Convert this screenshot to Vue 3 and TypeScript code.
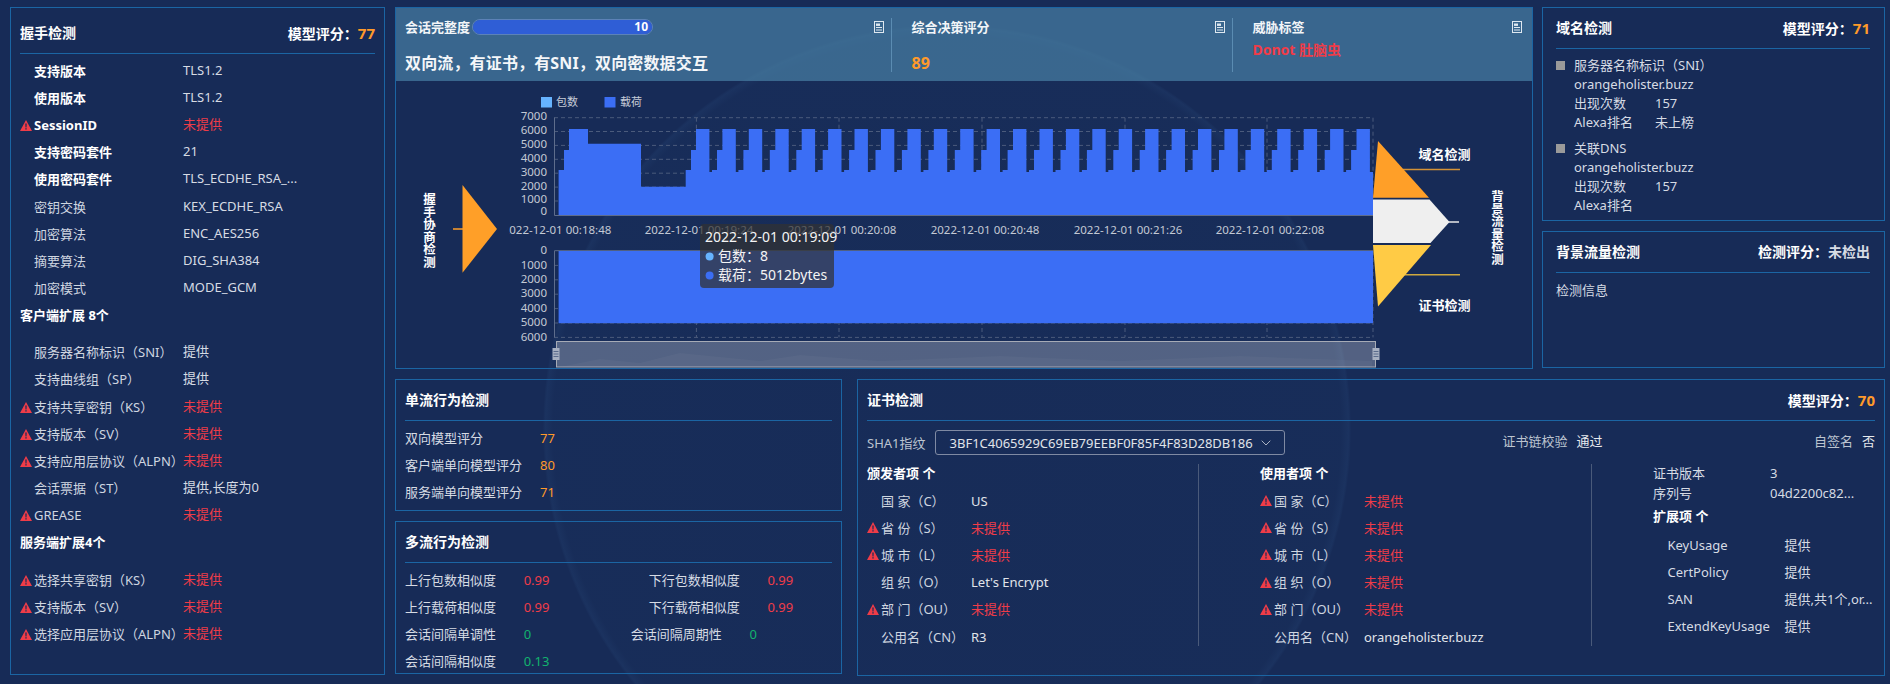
<script setup lang="ts">
interface Row { k: string; v: string; warn?: boolean; bold?: boolean }

const NA = '未提供'
const hsRows: Row[] = [
  { k: '支持版本', v: 'TLS1.2', bold: true },
  { k: '使用版本', v: 'TLS1.2', bold: true },
  { k: 'SessionID', v: NA, warn: true, bold: true },
  { k: '支持密码套件', v: '21', bold: true },
  { k: '使用密码套件', v: 'TLS_ECDHE_RSA_...', bold: true },
  { k: '密钥交换', v: 'KEX_ECDHE_RSA' },
  { k: '加密算法', v: 'ENC_AES256' },
  { k: '摘要算法', v: 'DIG_SHA384' },
  { k: '加密模式', v: 'MODE_GCM' },
]
const clientRows: Row[] = [
  { k: '服务器名称标识（SNI）', v: '提供' },
  { k: '支持曲线组（SP）', v: '提供' },
  { k: '支持共享密钥（KS）', v: NA, warn: true },
  { k: '支持版本（SV）', v: NA, warn: true },
  { k: '支持应用层协议（ALPN）', v: NA, warn: true },
  { k: '会话票据（ST）', v: '提供,长度为0' },
  { k: 'GREASE', v: NA, warn: true },
]
const serverRows: Row[] = [
  { k: '选择共享密钥（KS）', v: NA, warn: true },
  { k: '支持版本（SV）', v: NA, warn: true },
  { k: '选择应用层协议（ALPN）', v: NA, warn: true },
]
const single = [
  { k: '双向模型评分', v: '77' },
  { k: '客户端单向模型评分', v: '80' },
  { k: '服务端单向模型评分', v: '71' },
]
const multi = [
  { a: '上行包数相似度', av: '0.99', b: '下行包数相似度', bv: '0.99', tone: 'red', shift: false },
  { a: '上行载荷相似度', av: '0.99', b: '下行载荷相似度', bv: '0.99', tone: 'red', shift: false },
  { a: '会话间隔单调性', av: '0', b: '会话间隔周期性', bv: '0', tone: 'green', shift: true },
  { a: '会话间隔相似度', av: '0.13', b: '', bv: '', tone: 'green', shift: false },
]
const issuer: Row[] = [
  { k: '国 家（C）', v: 'US' },
  { k: '省 份（S）', v: NA, warn: true },
  { k: '城 市（L）', v: NA, warn: true },
  { k: '组 织（O）', v: "Let's Encrypt" },
  { k: '部 门（OU）', v: NA, warn: true },
  { k: '公用名（CN）', v: 'R3' },
]
const subject: Row[] = [
  { k: '国 家（C）', v: NA, warn: true },
  { k: '省 份（S）', v: NA, warn: true },
  { k: '城 市（L）', v: NA, warn: true },
  { k: '组 织（O）', v: NA, warn: true },
  { k: '部 门（OU）', v: NA, warn: true },
  { k: '公用名（CN）', v: 'orangeholister.buzz' },
]
const exts: Row[] = [
  { k: 'KeyUsage', v: '提供' },
  { k: 'CertPolicy', v: '提供' },
  { k: 'SAN', v: '提供,共1个,or...' },
  { k: 'ExtendKeyUsage', v: '提供' },
]

// chart geometry, in page pixels
const yTop = [116.7, 130.5, 144.4, 158.3, 172.2, 186.1, 200, 214]
const yTopLabels = ['7000', '6000', '5000', '4000', '3000', '2000', '1000', '0']
const yBot = [250, 264.4, 278.8, 293.2, 307.6, 322, 336.4]
const yBotLabels = ['0', '1000', '2000', '3000', '4000', '5000', '6000']
const vTicks = [696.4, 839, 982, 1125, 1267]
const xLabels = [
  { x: 557, t: '2022-12-01 00:18:48' },
  { x: 699, t: '2022-12-01 00:19:24' },
  { x: 842, t: '2022-12-01 00:20:08' },
  { x: 985, t: '2022-12-01 00:20:48' },
  { x: 1128, t: '2022-12-01 00:21:26' },
  { x: 1270, t: '2022-12-01 00:22:08' },
]

function barsPath(): string {
  const pts: [number, number][] = [
    [558.6, 169], [564, 169], [564, 149], [569, 149], [569, 128], [588, 128], [588, 142.7],
    [641, 142.7], [641, 185.7], [685.7, 185.7], [685.7, 169], [691, 169], [691, 149], [696, 149],
  ]
  for (let t = 696; t < 1360; t += 26.42) {
    const n = t + 26.42
    pts.push([t, 128], [t + 13.4, 128])
    if (n < 1360) {
      pts.push([t + 13.4, 171], [t + 16, 171], [t + 16, 169], [t + 21, 169], [t + 21, 149], [n, 149])
    } else {
      pts.push([t + 13.4, 171], [1373, 171])
    }
  }
  return 'M558.6 214 ' + pts.map((p) => `L${p[0].toFixed(1)} ${p[1]}`).join(' ') + ' L1373 214 Z'
}
const bars = barsPath()
</script>

<template>
  <div class="page">
    <div class="ring"></div>

    <section class="panel left">
      <header class="hd"><b>握手检测</b><b>模型评分：<i class="score">77</i></b></header>
      <div class="row" v-for="r in hsRows" :key="r.k">
        <span class="ic"><svg v-if="r.warn" viewBox="0 0 12 11" width="12" height="11"><path d="M6 0 12 11H0Z" fill="#ef3c48"/><path d="M5.3 3.6h1.4l-.2 4h-1zM5.3 8.3h1.4v1.3H5.3z" fill="#172b57"/></svg></span>
        <span class="k" :class="{ strong: r.bold }">{{ r.k }}</span>
        <span class="v" :class="{ red: r.v === NA }">{{ r.v }}</span>
      </div>
      <div class="sub first">客户端扩展 8个</div>
      <div class="row" v-for="r in clientRows" :key="r.k">
        <span class="ic"><svg v-if="r.warn" viewBox="0 0 12 11" width="12" height="11"><path d="M6 0 12 11H0Z" fill="#ef3c48"/><path d="M5.3 3.6h1.4l-.2 4h-1zM5.3 8.3h1.4v1.3H5.3z" fill="#172b57"/></svg></span>
        <span class="k">{{ r.k }}</span>
        <span class="v" :class="{ red: r.v === NA }">{{ r.v }}</span>
      </div>
      <div class="sub">服务端扩展4个</div>
      <div class="row" v-for="r in serverRows" :key="r.k">
        <span class="ic"><svg viewBox="0 0 12 11" width="12" height="11"><path d="M6 0 12 11H0Z" fill="#ef3c48"/><path d="M5.3 3.6h1.4l-.2 4h-1zM5.3 8.3h1.4v1.3H5.3z" fill="#172b57"/></svg></span>
        <span class="k">{{ r.k }}</span>
        <span class="v red">{{ r.v }}</span>
      </div>
    </section>

    <div class="right-area">
      <div class="top-row">
        <section class="panel center">
          <div class="banner">
            <div class="sec s1">
              <div class="line1">
                <b class="lt">会话完整度</b>
                <span class="progress"><span class="fill">10</span></span>
                <svg class="doc" viewBox="0 0 10 12" width="10" height="12"><rect x=".5" y=".5" width="9" height="11" fill="none" stroke="#dfe8f0"/><rect x="2" y="2.5" width="4" height="2.4" fill="#dfe8f0"/><path d="M2 6.5h6M2 9h6" stroke="#dfe8f0"/></svg>
              </div>
              <div class="line2">双向流，有证书，有SNI，双向密数据交互</div>
            </div>
            <div class="sec s2">
              <div class="line1">
                <b class="lt">综合决策评分</b>
                <svg class="doc" viewBox="0 0 10 12" width="10" height="12"><rect x=".5" y=".5" width="9" height="11" fill="none" stroke="#dfe8f0"/><rect x="2" y="2.5" width="4" height="2.4" fill="#dfe8f0"/><path d="M2 6.5h6M2 9h6" stroke="#dfe8f0"/></svg>
              </div>
              <div class="line2 orange">89</div>
            </div>
            <div class="sec s3">
              <div class="line1">
                <b class="lt">威胁标签</b>
                <svg class="doc" viewBox="0 0 10 12" width="10" height="12"><rect x=".5" y=".5" width="9" height="11" fill="none" stroke="#dfe8f0"/><rect x="2" y="2.5" width="4" height="2.4" fill="#dfe8f0"/><path d="M2 6.5h6M2 9h6" stroke="#dfe8f0"/></svg>
              </div>
              <div class="threat">Donot 肚脑虫</div>
            </div>
          </div>

          <svg class="chart" viewBox="396 80 1136 288" width="1136" height="288">
            <defs>
              <clipPath id="xclip"><rect x="509" y="215" width="1000" height="30" /></clipPath>
            </defs>

            <!-- legend -->
            <rect x="541" y="96" width="11" height="10.5" fill="#66b3ff" />
            <text class="legend" x="556" y="104.5">包数</text>
            <rect x="604.5" y="96" width="11" height="10.5" fill="#3b6ef5" />
            <text class="legend" x="620" y="104.5">载荷</text>

            <!-- grid -->
            <g class="grid">
              <line v-for="y in yTop.slice(0, 7)" :key="'t' + y" x1="554" :y1="y" x2="1373" :y2="y" />
              <line v-for="y in yBot.slice(1)" :key="'b' + y" x1="554" :y1="y" x2="1373" :y2="y" />
              <template v-for="x in vTicks" :key="'v' + x">
                <line :x1="x" y1="116.7" :x2="x" y2="214" />
                <line :x1="x" y1="250" :x2="x" y2="336.4" />
              </template>
              <line x1="1373" y1="116.7" x2="1373" y2="214" />
              <line x1="1373" y1="250" x2="1373" y2="336.4" />
            </g>
            <path d="M554.5 116.7V214.5H1373M554.5 336.4V249.7H1373" fill="none" stroke="#5e6d8c" />

            <!-- series -->
            <path :d="bars" fill="#3b6ef5" />
            <rect x="558.6" y="250" width="814.4" height="72.2" fill="#3b6ef5" />

            <!-- axis labels -->
            <text v-for="(t, i) in yTopLabels" :key="'yt' + i" class="axis" x="547" :y="yTop[i] + 2.4 - (i === 7 ? 2 : 0)" text-anchor="end">{{ t }}</text>
            <text v-for="(t, i) in yBotLabels" :key="'yb' + i" class="axis" x="547" :y="yBot[i] + 3.2" text-anchor="end">{{ t }}</text>
            <g clip-path="url(#xclip)">
              <text v-for="l in xLabels" :key="l.t" class="axis" :x="l.x" y="233" text-anchor="middle">{{ l.t }}</text>
            </g>

            <!-- zoom slider -->
            <path d="M560 366 L600 358 L640 362 L680 352 L760 360 L800 354 L880 360 L1000 355 L1120 360 L1240 355 L1372 360 V366Z" fill="#fff" opacity=".03" />
            <rect x="556.5" y="340.5" width="819" height="25.5" fill="#ffffff" fill-opacity=".26" stroke="#a6abb6" />
            <g fill="#a7b0c2">
              <rect x="552.5" y="347" width="7" height="12" />
              <rect x="1372.5" y="347" width="7" height="12" />
            </g>
            <path d="M553.5 350.5h5M553.5 353h5M553.5 355.5h5M1373.5 350.5h5M1373.5 353h5M1373.5 355.5h5" stroke="#5a6b8c" />

            <!-- left funnel -->
            <line x1="453" y1="228" x2="463" y2="228" stroke="#ff9f28" stroke-width="1.5" />
            <path d="M462.5 184 497 228 462.5 271.7Z" fill="#ff9f28" />
            <text class="vtext" x="428.6" y="192">握手协商检测</text>

            <!-- right funnel -->
            <path d="M1403 168.4H1460" stroke="#d49237" stroke-width="1.5" />
            <path d="M1448 221H1459" stroke="#e8e8e8" stroke-width="1.5" />
            <path d="M1403 273.7H1460" stroke="#cfa93f" stroke-width="1.5" />
            <path d="M1378 140 1429 196.8H1373Z" fill="#ff9f28" />
            <path d="M1373 198.4H1429.5L1449.5 221 1430.5 242H1373Z" fill="#efefef" />
            <path d="M1373 244H1431L1378 305.5Z" fill="#ffcb45" />
            <text class="flabel" x="1418.5" y="158">域名检测</text>
            <text class="flabel" x="1418.5" y="309">证书检测</text>
            <text class="vtext" x="1496.5" y="189">背景流量检测</text>

            <!-- tooltip -->
            <rect x="700" y="223" width="134" height="64" rx="4" fill="#323232" fill-opacity=".72" />
            <text class="tip" x="705" y="241">2022-12-01 00:19:09</text>
            <circle cx="709.6" cy="255.4" r="4" fill="#66b3ff" />
            <text class="tip" x="718" y="260">包数：8</text>
            <circle cx="709.6" cy="274.4" r="4" fill="#3b6ef5" />
            <text class="tip" x="718" y="279">载荷：5012bytes</text>
          </svg>
        </section>

        <div class="side">
          <section class="panel domain">
            <header class="hd"><b>域名检测</b><b>模型评分：<i class="score">71</i></b></header>
            <div class="dblock">
              <i class="sq"></i>
              <div class="dlines">
                <div>服务器名称标识（SNI）</div>
                <div>orangeholister.buzz</div>
                <div class="dpair"><span>出现次数</span><span class="dv">157</span></div>
                <div class="dpair"><span>Alexa排名</span><span class="dv">未上榜</span></div>
              </div>
            </div>
            <div class="dblock second">
              <i class="sq"></i>
              <div class="dlines">
                <div>关联DNS</div>
                <div>orangeholister.buzz</div>
                <div class="dpair"><span>出现次数</span><span class="dv">157</span></div>
                <div class="dpair"><span>Alexa排名</span></div>
              </div>
            </div>
          </section>
          <section class="panel background">
            <header class="hd"><b>背景流量检测</b><b>检测评分：<span class="undet">未检出</span></b></header>
            <div class="info">检测信息</div>
          </section>
        </div>
      </div>

      <div class="bottom-row">
        <div class="flows">
          <section class="panel single">
            <header class="hd"><b>单流行为检测</b></header>
            <div class="srow" v-for="r in single" :key="r.k"><span class="sk">{{ r.k }}</span><span class="orange-t">{{ r.v }}</span></div>
          </section>
          <section class="panel multi">
            <header class="hd"><b>多流行为检测</b></header>
            <div class="mrow" v-for="m in multi" :key="m.a">
              <span class="mk">{{ m.a }}</span>
              <span class="mv" :class="m.tone">{{ m.av }}</span>
              <span class="mk2" :class="{ shifted: m.shift }">{{ m.b }}</span>
              <span :class="m.tone">{{ m.bv }}</span>
            </div>
          </section>
        </div>

        <section class="panel cert">
          <header class="hd"><b>证书检测</b><b>模型评分：<i class="score">70</i></b></header>
          <div class="sha">
            <span class="dim">SHA1指纹</span>
            <div class="select">
              <span>3BF1C4065929C69EB79EEBF0F85F4F83D28DB186</span>
              <svg viewBox="0 0 10 6" width="10" height="6"><path d="M.7.7 5 5 9.3.7" fill="none" stroke="#aab2c2" stroke-width="1" /></svg>
            </div>
            <span class="chain"><span class="dim">证书链校验</span><span class="chain-v">通过</span></span>
            <span class="self"><span class="dim">自签名</span><span class="chain-v">否</span></span>
          </div>
          <div class="cols">
            <div class="col c1">
              <div class="chead">颁发者项 个</div>
              <div class="crow" v-for="r in issuer" :key="r.k">
                <span class="ic2"><svg v-if="r.warn" viewBox="0 0 12 11" width="12" height="11"><path d="M6 0 12 11H0Z" fill="#ef3c48"/><path d="M5.3 3.6h1.4l-.2 4h-1zM5.3 8.3h1.4v1.3H5.3z" fill="#172b57"/></svg></span>
                <span class="ck">{{ r.k }}</span>
                <span :class="r.v === NA ? 'red' : 'light'">{{ r.v }}</span>
              </div>
            </div>
            <div class="col c2">
              <div class="chead">使用者项 个</div>
              <div class="crow" v-for="r in subject" :key="r.k">
                <span class="ic2"><svg v-if="r.warn" viewBox="0 0 12 11" width="12" height="11"><path d="M6 0 12 11H0Z" fill="#ef3c48"/><path d="M5.3 3.6h1.4l-.2 4h-1zM5.3 8.3h1.4v1.3H5.3z" fill="#172b57"/></svg></span>
                <span class="ck">{{ r.k }}</span>
                <span :class="r.v === NA ? 'red' : 'light'">{{ r.v }}</span>
              </div>
            </div>
            <div class="col c3">
              <div class="meta first"><span>证书版本</span><span>3</span></div>
              <div class="meta"><span>序列号</span><span>04d2200c82...</span></div>
              <div class="chead ext">扩展项 个</div>
              <div class="erow" v-for="r in exts" :key="r.k"><span>{{ r.k }}</span><span>{{ r.v }}</span></div>
            </div>
          </div>
        </section>
      </div>
    </div>
  </div>
</template>

<style>
html, body { margin: 0; background: #172b57; }
</style>

<style scoped>
.page {
  position: relative;
  width: 1890px;
  height: 684px;
  box-sizing: border-box;
  padding: 7px 5px 8px 10px;
  display: flex;
  gap: 10px;
  overflow: hidden;
  background: #172b57;
  color: #d6dbe4;
  font: 13px/18px "Noto Sans", "Noto Sans CJK SC", sans-serif;
}
.ring {
  position: absolute;
  left: 543px;
  top: 25px;
  width: 808px;
  height: 808px;
  border-radius: 50%;
  background: radial-gradient(closest-side, rgba(40, 90, 140, 0.02) 0, rgba(40, 90, 140, 0.04) 97.5%, rgba(60, 110, 165, 0.11) 99.4%, rgba(60, 110, 165, 0.02) 100%);
}
.panel {
  position: relative;
  box-sizing: border-box;
  border: 1px solid #1b65a3;
}
.hd {
  display: flex;
  justify-content: space-between;
  align-items: center;
  height: 41px;
  box-sizing: border-box;
  border-bottom: 1px solid #1b65a3;
  color: #fff;
  font-size: 14px;
}
.hd b { font-weight: 700; }
.score { font-style: normal; font-size: 15px; color: #ff9a2a; }

.left { width: 375px; height: 668px; padding: 5px 9px 0; }
.row { display: flex; align-items: center; height: 27.2px; }
.ic { width: 14px; display: flex; align-items: center; padding-top: 1px; flex: none; }
.k { width: 149px; flex: none; white-space: nowrap; color: #cfd6e0; }
.k.strong { color: #fff; font-weight: 700; }
.v { padding-bottom: 2px; color: #d6dbe4; }
.red { color: #ef3c48; }
.sub { height: 27.2px; line-height: 27.2px; margin-bottom: 9.8px; color: #fff; font-weight: 700; }
.hd + .row { margin-top: 3px; }

.right-area { flex: 1; display: flex; flex-direction: column; gap: 10px; min-width: 0; }
.top-row { display: flex; height: 362px; gap: 9px; }
.center { width: 1138px; }
.banner { display: flex; height: 73px; align-items: center; background: rgba(72, 128, 165, 0.7); }
.sec { height: 54px; box-sizing: border-box; display: flex; flex-direction: column; }
.s1 { width: 495.5px; padding: 0 7px 0 9px; border-right: 1px solid #5b8cb2; }
.s2 { width: 341px; padding: 0 7px 0 20px; border-right: 1px solid #5b8cb2; }
.s3 { flex: 1; padding: 0 10px 0 20px; }
.line1 { display: flex; align-items: center; height: 18px; }
.lt { color: #f2f5f8; font-weight: 700; white-space: nowrap; }
.doc { margin-left: auto; flex: none; }
.progress {
  width: 181px; height: 16px; margin-left: 2px; box-sizing: border-box;
  border-radius: 8px; border: 1px solid rgba(127, 158, 224, 0.5); overflow: hidden; display: block;
}
.fill {
  display: block; height: 100%; background: #2f5ed6; color: #fff; text-align: right;
  padding-right: 4px; font-size: 12px; line-height: 14px; font-weight: 700;
}
.line2 { margin-top: auto; height: 18px; line-height: 18px; font-size: 16px; font-weight: 700; color: #f4f6f9; white-space: nowrap; letter-spacing: 0.15px; }
.orange { color: #ff9a2a; }
.threat { margin-top: 5px; color: #ef3c48; font-weight: 700; font-size: 14px; line-height: 18px; }

.chart { display: block; }
.legend { font-size: 11px; fill: #c6ccd8; }
.axis { font-size: 11.5px; fill: #c3c9d4; }
.grid line { stroke: #4b5b7c; stroke-dasharray: 4 3; stroke-width: 1; }
.vtext { writing-mode: vertical-rl; font-size: 12.5px; font-weight: 700; fill: #fff; }
.flabel { font-size: 13px; font-weight: 700; fill: #fff; }
.tip { font-size: 14px; fill: #f4f4f4; }

.side { flex: 1; display: flex; flex-direction: column; gap: 10px; }
.domain { height: 214px; padding: 0 14px 0 13px; }
.background { height: 137px; padding: 0 14px 0 13px; }
.dblock { display: flex; margin-top: 7px; line-height: 19px; }
.dblock.second { margin-top: 7px; }
.sq { flex: none; width: 9px; height: 9px; margin: 5px 9px 0 0; background: #9a9a9a; }
.dlines { color: #d6dbe4; }
.dpair { display: flex; }
.dpair > span:first-child { width: 81px; }
.undet { color: #d6dbe4; }
.info { margin-top: 8px; }

.bottom-row { display: flex; gap: 15px; height: 297px; }
.flows { width: 447px; display: flex; flex-direction: column; gap: 10px; }
.single { height: 132px; padding: 0 9px; }
.multi { height: 153px; padding: 0 9px; }
.srow { display: flex; align-items: center; height: 27.2px; }
.single .hd + .srow { margin-top: 3px; }
.sk { width: 135px; flex: none; }
.orange-t { color: #ff9a2a; }
.mrow { display: flex; align-items: center; height: 27.2px; white-space: nowrap; }
.multi .hd + .mrow { margin-top: 3px; }
.mk { width: 118.7px; flex: none; }
.mv { width: 125px; flex: none; }
.mk2 { width: 118.7px; flex: none; }
.mk2.shifted { margin-left: -18px; }
.green { color: #12b26e; }
.cert { flex: 1; padding: 0 9px; }
.sha { display: flex; align-items: center; height: 43px; position: relative; }
.dim { color: #bcc4d0; }
.select {
  width: 350px; height: 24.5px; margin-left: 9px; box-sizing: border-box;
  border: 1px solid #7f8aa3; border-radius: 3px; display: flex; align-items: center;
  justify-content: space-between; padding: 0 13px 0 14px; color: #e0e4ea; white-space: nowrap;
}
.chain { margin-left: 218px; margin-top: -4px; display: flex; }
.self { margin-left: auto; margin-top: -4px; display: flex; }
.chain-v { margin-left: 9px; color: #e6e9ee; }
.cols { display: flex; height: 182px; }
.col { box-sizing: border-box; }
.c1 { width: 332px; border-right: 1px solid #4a5a7a; }
.c2 { width: 393px; padding-left: 61px; border-right: 1px solid #4a5a7a; }
.c3 { flex: 1; padding-left: 61px; }
.chead { height: 19px; line-height: 19px; margin-bottom: 4px; color: #fff; font-weight: 700; }
.crow { display: flex; align-items: center; height: 27.2px; white-space: nowrap; }
.ic2 { width: 14px; flex: none; display: flex; }
.ck { width: 90px; flex: none; color: #cfd6e0; }
.light { color: #e0e4ea; }
.meta { display: flex; height: 20px; line-height: 20px; }
.meta.first { margin-top: -1px; }
.meta > span:first-child { width: 117px; }
.ext { margin: 4px 0 5px; }
.erow { display: flex; align-items: center; height: 27.2px; padding-left: 14.5px; white-space: nowrap; }
.erow > span:first-child { width: 117px; flex: none; }
</style>
